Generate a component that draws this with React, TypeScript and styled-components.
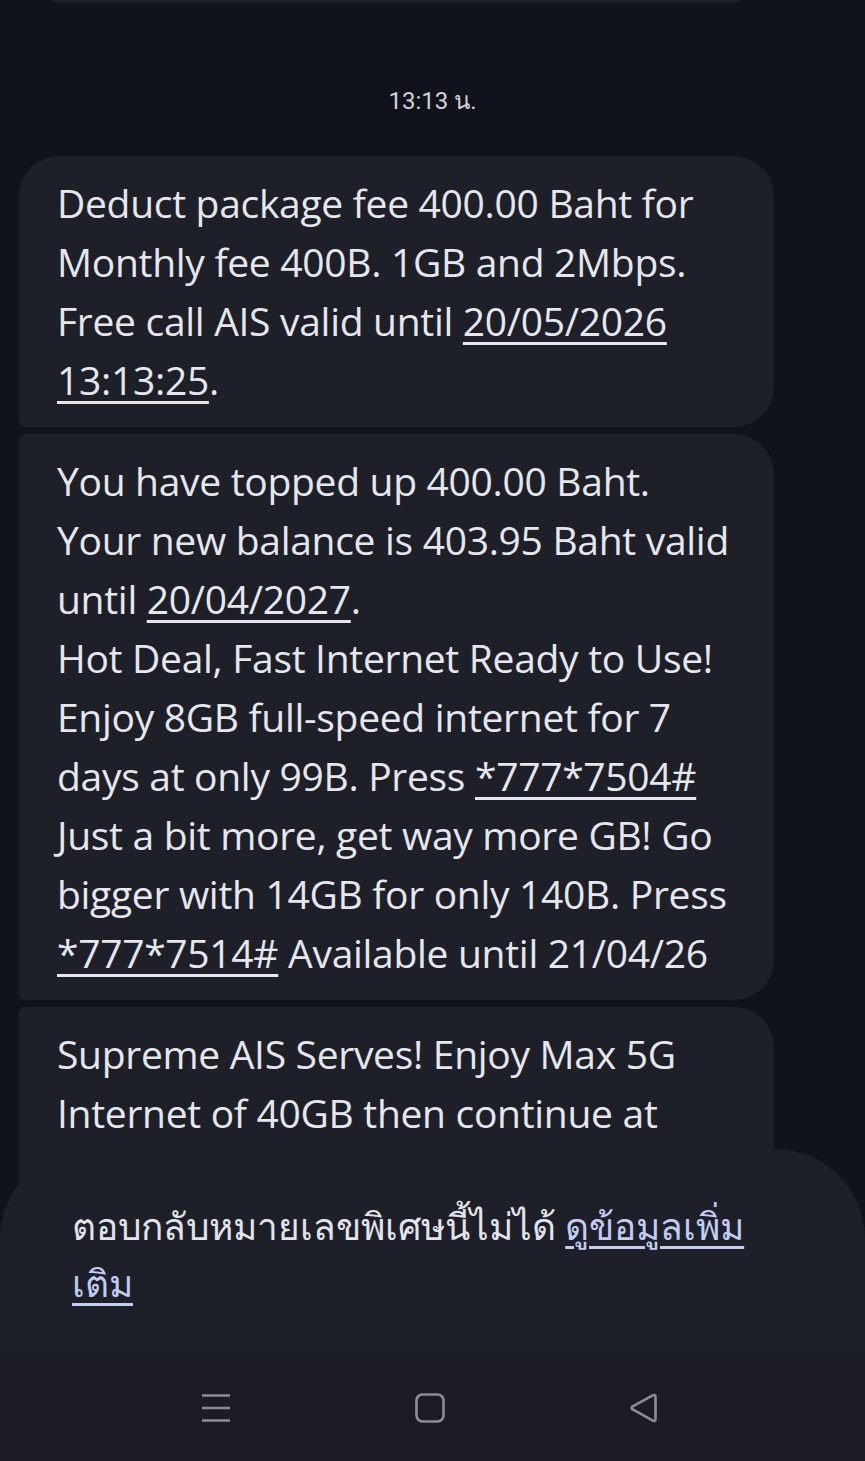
import React from 'react';
import styled, {createGlobalStyle} from 'styled-components';

const GlobalStyle = createGlobalStyle`
  html, body {
    margin: 0;
    padding: 0;
    background: #10131b;
  }
`

// each message is a list of lines, each line a list of parts (link = underlined)
type Part = { text: string, link?: boolean }
const t = (text: string): Part => ({text})
const u = (text: string): Part => ({text, link: true})

const messages: Part[][][] = [
    [
        [t('Deduct package fee 400.00 Baht for')],
        [t('Monthly fee 400B. 1GB and 2Mbps.')],
        [t('Free call AIS valid until '), u('20/05/2026')],
        [u('13:13:25'), t('.')],
    ],
    [
        [t('You have topped up 400.00 Baht.')],
        [t('Your new balance is 403.95 Baht valid')],
        [t('until '), u('20/04/2027'), t('.')],
        [t('Hot Deal, Fast Internet Ready to Use!')],
        [t('Enjoy 8GB full-speed internet for 7')],
        [t('days at only 99B. Press '), u('*777*7504#')],
        [t('Just a bit more, get way more GB! Go')],
        [t('bigger with 14GB for only 140B. Press')],
        [u('*777*7514#'), t(' Available until 21/04/26')],
    ],
    [
        [t('Supreme AIS Serves! Enjoy Max 5G')],
        [t('Internet of 40GB then continue at')],
        [t('1Mbps unlimited for 30 days only 199B.')],
        [t('Press *777*7799#')],
    ],
]

export default function App() {
    return (
        <Screen>
            <GlobalStyle/>
            <PrevBubble/>
            <Time>13:13 น.</Time>
            <List>
                {messages.map((lines, i) => (
                    <Bubble key={i} first={i === 0}>
                        {lines.map((parts, k) => (
                            <Line key={k}>
                                {parts.map((p, j) => p.link
                                    ? <Link key={j}>{p.text}</Link>
                                    : <React.Fragment key={j}>{p.text}</React.Fragment>)}
                            </Line>
                        ))}
                    </Bubble>
                ))}
            </List>
            <Footer>
                <Sheet>
                    <Notice>
                        ตอบกลับหมายเลขพิเศษนี้ไม่ได้ <MoreLink>ดูข้อมูลเพิ่ม<br/>เติม</MoreLink>
                    </Notice>
                </Sheet>
                <NavBar>
                    <NavButton>
                        <svg width="30" height="28" viewBox="0 0 30 28">
                            <path d="M1 1.5h28M1 14h28M1 26.5h28" stroke="#8c8e96" strokeWidth="2.6" fill="none"/>
                        </svg>
                    </NavButton>
                    <NavButton>
                        <svg width="30" height="30" viewBox="0 0 30 30">
                            <rect x="1.5" y="1.5" width="27" height="27" rx="6" stroke="#8c8e96" strokeWidth="2.6" fill="none"/>
                        </svg>
                    </NavButton>
                    <NavButton>
                        <svg width="30" height="30" viewBox="0 0 30 30">
                            <path d="M26.5 3.5v23a1.5 1.5 0 0 1-2.3 1.3L3.3 16.2a1.5 1.5 0 0 1 0-2.5L24.2 2.2a1.5 1.5 0 0 1 2.3 1.3z"
                                  stroke="#8c8e96" strokeWidth="2.6" fill="none" strokeLinejoin="round"/>
                        </svg>
                    </NavButton>
                </NavBar>
            </Footer>
        </Screen>
    );
}

const Screen = styled.div`
  position: relative;
  width: 865px;
  height: 1461px;
  overflow: hidden;
  background: #10131b;
  font-family: "Open Sans", Roboto, "Noto Sans", sans-serif;
  color: #e6e7ec;
`

const PrevBubble = styled.div`
  height: 3px;
  margin: 0 125px 0 52px;
  background: #1c1f27;
  border-radius: 0 0 10px 10px;
`

const Time = styled.div`
  margin-top: 83px;
  text-align: center;
  font-family: Roboto, sans-serif;
  font-size: 24px;
  line-height: 30px;
  color: #d0d1d7;
`

const List = styled.div`
  display: flex;
  flex-direction: column;
  gap: 7px;
  margin: 40px 91px 0 19px;
`

const Bubble = styled.div<{ first?: boolean }>`
  background: #1e2029;
  border-radius: ${props => props.first ? '40px' : '6px'} 40px 40px 6px;
  padding: 17px 20px 18px 38px;
  font-size: 39px;
  line-height: 59px;
  letter-spacing: -0.3px;
`

const Line = styled.div`
  white-space: nowrap;
`

const Link = styled.span`
  text-decoration: underline;
  text-decoration-thickness: 2.5px;
  text-underline-offset: 6px;
`

const Footer = styled.div`
  position: absolute;
  left: 0;
  right: 0;
  bottom: 0;
  display: flex;
  flex-direction: column;
`

const Sheet = styled.div`
  height: 206px;
  box-sizing: border-box;
  background: #1e2029;
  border-radius: 90px 90px 0 0;
  padding: 50px 20px 0 72px;
`

const Notice = styled.div`
  font-family: Roboto, "Noto Sans", sans-serif;
  font-size: 37px;
  line-height: 57px;
  color: #e3e4ea;
  white-space: nowrap;
`

const MoreLink = styled.span`
  color: #c2ccf4;
  text-decoration: underline;
  text-decoration-thickness: 3px;
  text-underline-offset: 6px;
`

const NavBar = styled.div`
  height: 106px;
  background: #1b1c26;
  display: flex;
  justify-content: center;
  align-items: center;
  gap: 184px;
  padding: 0 5px 0 0;
  box-sizing: border-box;
`

const NavButton = styled.div`
  width: 30px;
  height: 30px;
  display: flex;
  align-items: center;
  justify-content: center;
`
